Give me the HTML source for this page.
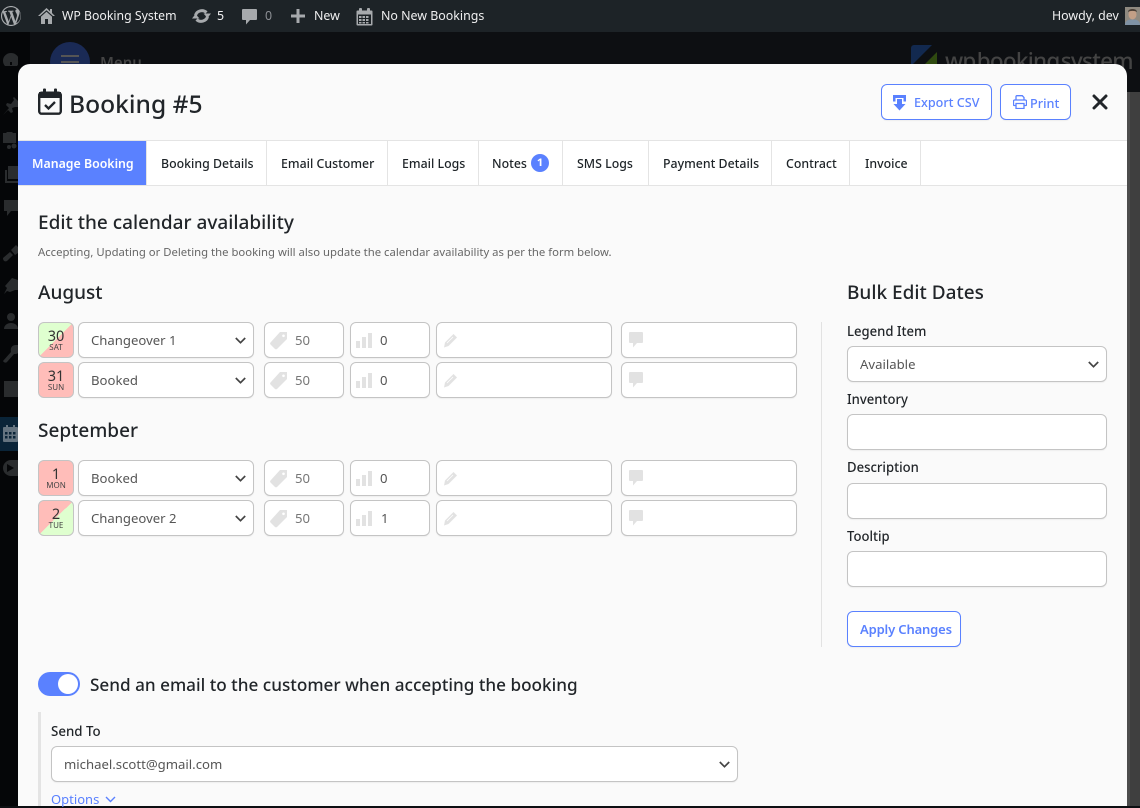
<!DOCTYPE html>
<html><head><meta charset="utf-8"><title>Booking #5</title>
<style>
*{box-sizing:border-box}
html,body{margin:0;padding:0;width:1140px;height:806px;overflow:hidden;background:#0d0f12;font-family:"Noto Sans","Noto Sans CJK SC","DejaVu Sans",sans-serif;color:#212529}
.a{position:absolute;white-space:nowrap}
svg{position:absolute;display:block}
.bar{color:#f0f0f1;font-size:12.4px;line-height:16px}
.box{position:absolute;height:36px;background:#fff;border:1px solid #c4c4c4;border-radius:6px;box-shadow:0 1px 1px rgba(0,0,0,.05)}
.t{font-size:12.35px;line-height:16px;color:#1d2327;top:156px;font-weight:500}
.tb{position:absolute;top:141px;width:1px;height:44px;background:#e4e4e4}
.v{font-size:13.15px;line-height:16px;color:#555}
.d{position:absolute;width:36px;height:36px;border:1px solid #c4c4c4;border-radius:6px;text-align:center;color:#333}
.d b{display:block;font-weight:400;font-size:14.500px;line-height:14px;margin-top:6px}
.d i{display:block;font-style:normal;font-size:8px;line-height:9px;color:#444}
.g{background:linear-gradient(to bottom right,#dfffcf 50%,#ffbdb9 50%)}
.r{background:#ffbdb9}
.y{background:linear-gradient(to bottom right,#ffbdb9 50%,#dfffcf 50%)}
.l{font-size:13.1px;line-height:16px;font-weight:500;color:#212529}
.h{font-size:19px;line-height:24px;font-weight:500;color:#212529}
</style></head><body>

<!-- backdrop -->
<div class="a" style="left:0;top:32px;width:30px;height:774px;background:#050608"></div>
<div class="a" style="left:0;top:417px;width:18px;height:34px;background:#0a2438"></div>
<div class="a" style="left:1127px;top:92px;width:13px;height:714px;background:#3f3f3f"></div>
<div class="a" style="left:1127px;top:92px;width:3px;height:714px;background:#4c4c4c"></div>
<div class="a" style="left:50px;top:42px;width:40px;height:40px;border-radius:50%;background:#1a2a55"></div>
<div class="a" style="left:61px;top:55px;width:18px;height:2px;background:#555;box-shadow:0 6px 0 #555"></div>
<div class="a" style="left:100px;top:52px;font-size:15px;line-height:22px;color:#444;font-weight:600">Menu</div>
<svg style="left:911px;top:45px" width="27" height="27" viewBox="0 0 27 27"><path d="M3 0h18L0 21V3a3 3 0 0 1 3-3z" fill="#12294f"/><path d="M26 7v17a3 3 0 0 1-3 3H6z" fill="#2f4a10"/></svg>
<div class="a" style="left:945px;top:46px;font-size:22.500px;line-height:30px;color:#444;font-weight:500;letter-spacing:-.75px;word-spacing:-4px">wp booking system</div>

<!-- sidebar icons -->
<svg style="left:0;top:0" width="18" height="806" viewBox="0 0 18 806" fill="#2a2c2e">
<path fill-rule="evenodd" d="M11 53a8 7.500 0 0 0-8 7.500c0 2.500.7 4 2 5.500h12c1.300-1.500 2-3 2-5.500A8 7.500 0 0 0 11 53zM10 62h2v3h-2z"/>
<path d="M3 115l6-7-3-3 1-2 4 1 3-4-1-2 1-1 4 4v6h-3l-3 1 1 4-2 1-3-3z"/>
<path d="M3 133h3l1-1h5l1 1h3v10H3z"/><circle cx="14" cy="146" r="2.500"/><circle cx="9" cy="147" r="2"/>
<path d="M8 166h10v13H8z"/><path d="M5 170h2v11h11v2H5z"/>
<path d="M4 200h14v11h-7l-4 5v-5H4z"/>
<path d="M3 258l7-6 3 3-6 6c-2 1-4 0-4-3zM11 250l5-5 2 2v6l-3 2z"/>
<path d="M4 294l3-6-2-2 7-8 6 2v10l-3 0-5 2-3-1z"/>
<circle cx="11" cy="317" r="4"/><path d="M4 329c0-8 14-8 14 0z"/>
<path d="M3 361l8-9c-1-4 1-7 5-7l2 0v8c-1 1-2 1-4 1l-7 8c-1 1-3 1-4-1z"/>
<path d="M4 381h14v16H4z"/>
<path d="M11 460a8 8 0 1 0 0 16h7v-16z"/>
</svg>
<svg style="left:3px;top:425px" width="15" height="18" viewBox="0 0 15 18"><rect y="2" width="15" height="15" rx="1" fill="#657480"/><rect x="3" width="2" height="4" fill="#657480"/><rect x="10" width="2" height="4" fill="#657480"/><path d="M2 7h2.500v2.500H2zM6 7h2.500v2.500H6zM10 7h2.500v2.500H10zM2 11h2.500v2.500H2zM6 11h2.500v2.500H6zM10 11h2.500v2.500H10z" fill="#0a2438"/></svg>
<svg style="left:6px;top:464px" width="12" height="8" viewBox="0 0 12 8"><path d="M1 0l7 4-7 4z" fill="#050608"/></svg>

<!-- admin bar -->
<div class="a" style="left:0;top:0;width:1140px;height:32px;background:#1d2327"></div>
<svg style="left:1px;top:6px" width="20" height="20" viewBox="0 0 20 20"><path fill-rule="evenodd" d="M20 10c0-5.510-4.490-10-10-10C4.480 0 0 4.490 0 10c0 5.520 4.480 10 10 10 5.510 0 10-4.480 10-10zM7.780 15.370L4.370 6.220c.55-.02 1.170-.08 1.170-.08.5-.06.44-1.130-.06-1.110 0 0-1.450.11-2.370.11-.18 0-.37 0-.58-.01C4.120 2.690 6.930 1.110 10 1.110c2.290 0 4.380.87 5.950 2.300-.04 0-.07-.01-.12-.01-.87 0-1.480.75-1.480 1.560 0 .73.42 1.340.87 2.070.34.59.73 1.340.73 2.430 0 .75-.29 1.620-.67 2.830l-.88 2.940-3.180-9.460c.53-.03 1-.08 1-.08.47-.06.42-1.130-.06-1.110 0 0-1.420.11-2.340.11-.87 0-2.320-.11-2.320-.11-.48-.02-.54 1.080-.06 1.110l.92.08 1.370 3.750-1.930 5.770zM1.110 10c0-1.290.28-2.510.77-3.620l4.240 11.620C3.160 16.560 1.110 13.520 1.110 10zm8.890 8.890c-.87 0-1.710-.13-2.510-.37l2.660-7.740 2.730 7.480c.02.04.04.08.06.12-.92.33-1.920.51-2.940.51zm5.200-1.550l2.710-7.840c.51-1.270.67-2.280.67-3.180 0-.33-.02-.63-.06-.92.7 1.280 1.100 2.740 1.100 4.600 0 3.270-1.780 6.130-4.420 7.340z" fill="#a7aaad"/></svg>
<svg style="left:38px;top:8px" width="17" height="16" viewBox="0 0 17 16" fill="#a7aaad"><path d="M8.500 0L0 8h2L8.500 2.200 15 8h2l-3-3V1h-2v2.200z"/><path d="M3 8.600L8.500 3.800 14 8.600V16h-4v-5H7v5H3z"/></svg>
<div class="a bar" style="left:62px;top:8px;font-size:12.27px">WP Booking System</div>
<svg style="left:192px;top:8px" width="19" height="16" viewBox="0 0 19 16"><path d="M3.500 7.500A6.500 6 0 0 1 14.500 4.500" fill="none" stroke="#a7aaad" stroke-width="3"/><path d="M11.500 5.500h7.500l-3.500 4.500z" fill="#a7aaad"/><path d="M15.500 8.500A6.500 6 0 0 1 4.500 11.500" fill="none" stroke="#a7aaad" stroke-width="3"/><path d="M0 10.500h7.500L3.500 6z" fill="#a7aaad"/></svg>
<div class="a bar" style="left:217px;top:8px">5</div>
<svg style="left:242px;top:9px" width="15" height="16" viewBox="0 0 15 16"><path d="M1 0h13a1 1 0 0 1 1 1v9a1 1 0 0 1-1 1H8l-4 4.500V11H1a1 1 0 0 1-1-1V1a1 1 0 0 1 1-1z" fill="#a7aaad"/></svg>
<div class="a bar" style="left:265px;top:8px;color:#8c8f94">0</div>
<svg style="left:291px;top:9px" width="14" height="14" viewBox="0 0 14 14"><path d="M5.500 0h3v5.500H14v3H8.500V14h-3V8.500H0v-3h5.500z" fill="#a7aaad"/></svg>
<div class="a bar" style="left:314px;top:8px">New</div>
<svg style="left:356px;top:8px" width="17" height="18" viewBox="0 0 17 18"><rect x="0.500" y="2.500" width="16" height="15" rx="1" fill="#a7aaad"/><rect x="3" y="0" width="3" height="5" rx="1" fill="#a7aaad"/><rect x="11" y="0" width="3" height="5" rx="1" fill="#a7aaad"/><path d="M2 6.500h13v9.500H2z" fill="#1d2327"/><path d="M3 8h2.500v2H3zM6.500 8h2.500v2H6.500zM10 8h2.500v2H10zM3 11h2.500v2H3zM6.500 11h2.500v2H6.500zM10 11h2.500v2H10zM3 14h2.500v1.500H3zM6.500 14h2.500v1.500H6.500zM10 14h2.500v1.500H10z" fill="#a7aaad"/></svg>
<div class="a bar" style="left:381px;top:8px">No New Bookings</div>
<div class="a bar" style="left:1052px;top:8px">Howdy, dev</div>
<svg style="left:1125px;top:7px" width="15" height="18" viewBox="0 0 15 18"><rect width="15" height="18" fill="#8f8a80"/><ellipse cx="7.500" cy="7.500" rx="4" ry="5" fill="#c29f86"/><path d="M3 5c0-4 9-4 9 0-2-1.500-7-1.500-9 0z" fill="#4a3f35"/><path d="M0 18c0-5 4-5.500 7.500-5.500S15 13 15 18z" fill="#7f92a5"/></svg>

<!-- modal -->
<div class="a" style="left:18px;top:64px;width:1109px;height:742px;background:#fafafa;border-radius:12px 12px 0 0;overflow:hidden"></div>

<svg style="left:38px;top:88px" width="24" height="27" viewBox="0 0 24 27"><rect x="1.200" y="4.700" width="21.600" height="21" rx="2.500" fill="none" stroke="#212529" stroke-width="2.400"/><rect x="1" y="4" width="22" height="6" fill="#212529"/><rect x="5" y="0.500" width="3" height="6" rx="1" fill="#212529"/><rect x="16" y="0.500" width="3" height="6" rx="1" fill="#212529"/><path d="M7 17l3.500 3.500L17 14" fill="none" stroke="#212529" stroke-width="2.300"/></svg>
<div class="a" style="left:69px;top:88px;font-size:24.600px;line-height:34px;font-weight:500;color:#212529">Booking #5</div>

<div class="box" style="left:881px;top:84px;width:111px;height:36px;border-color:#5a81ff"></div>
<svg style="left:893px;top:95px" width="14" height="16" viewBox="0 0 14 16"><path d="M0 0h13v6.500h-2.500V3h-8v3.500H0z" fill="#5a81ff"/><path d="M4 4h5v5h3.500L6.500 15.500 .5 9H4z" fill="#5a81ff"/></svg>
<div class="a" style="left:914px;top:94px;font-size:12.600px;line-height:18px;font-weight:500;color:#5a81ff">Export CSV</div>
<div class="box" style="left:1000px;top:84px;width:71px;height:36px;border-color:#5a81ff"></div>
<svg style="left:1013px;top:95px" width="14" height="14" viewBox="0 0 14 14"><path d="M3 5V1.500A.8.800 0 0 1 3.800.7h5.500L11 2.500V5M3 10.500H1.200a.7.700 0 0 1-.7-.7V6.200A1.200 1.200 0 0 1 1.700 5h10.600a1.200 1.200 0 0 1 1.200 1.200v3.600a.7.700 0 0 1-.7.700H11M3 8.500h8v5H3z" fill="none" stroke="#5a81ff" stroke-width="1.300"/></svg>
<div class="a" style="left:1030px;top:94px;font-size:12.700px;line-height:18px;font-weight:500;color:#5a81ff">Print</div>
<svg style="left:1092px;top:94px" width="16" height="16" viewBox="0 0 16 16"><path d="M2 2l12 12M14 2L2 14" stroke="#212529" stroke-width="3" stroke-linecap="round"/></svg>

<!-- tabs -->
<div class="a" style="left:18px;top:140px;width:1109px;height:46px;background:#fff;border-top:1px solid #e4e4e4;border-bottom:1px solid #e4e4e4"></div>
<div class="a" style="left:18px;top:141px;width:128px;height:44px;background:#5a81ff"></div>
<div class="tb" style="left:146px"></div><div class="tb" style="left:266px"></div><div class="tb" style="left:387px"></div><div class="tb" style="left:478px"></div><div class="tb" style="left:562px"></div><div class="tb" style="left:648px"></div><div class="tb" style="left:771px"></div><div class="tb" style="left:849px"></div><div class="tb" style="left:920px"></div>
<div class="a t" style="left:32px;color:#fff;font-weight:600">Manage Booking</div>
<div class="a t" style="left:161px">Booking Details</div>
<div class="a t" style="left:281px">Email Customer</div>
<div class="a t" style="left:402px">Email Logs</div>
<div class="a t" style="left:492px">Notes</div>
<div class="a" style="left:531px;top:154px;width:18px;height:18px;border-radius:50%;background:#5a81ff;color:#fff;font-size:11px;line-height:18px;text-align:center;font-weight:700">1</div>
<div class="a t" style="left:577px">SMS Logs</div>
<div class="a t" style="left:663px">Payment Details</div>
<div class="a t" style="left:786px">Contract</div>
<div class="a t" style="left:865px">Invoice</div>

<div class="a" style="left:38px;top:210px;font-size:19px;line-height:24px;font-weight:500">Edit the calendar availability</div>
<div class="a" style="left:38px;top:245px;font-size:11.320px;line-height:16px;color:#666">Accepting, Updating or Deleting the booking will also update the calendar availability as per the form below.</div>
<div class="a h" style="left:38px;top:280px">August</div>
<div class="a h" style="left:38px;top:418px">September</div>
<div class="a h" style="left:847px;top:280px">Bulk Edit Dates</div>

<!-- row 1 -->
<div class="d g" style="left:38px;top:322px"><b>30</b><i>SAT</i></div>
<div class="box" style="left:78px;top:322px;width:176px"></div><div class="a v" style="left:91px;top:332px">Changeover 1</div>
<svg style="left:235px;top:337px" width="11" height="8" viewBox="0 0 11 8"><path d="M.8 1l4.700 4.700L10.200 1" fill="none" stroke="#444" stroke-width="1.700"/></svg>
<div class="box" style="left:264px;top:322px;width:80px"></div><svg style="left:270px;top:332px" width="18" height="18" viewBox="0 0 18 18"><path d="M10 0h7v7L7 17q-1 .8-2 0L.5 12.500q-.8-1 0-2z" fill="#e2e2e2"/><circle cx="13.500" cy="3.800" r="1.300" fill="#fff"/></svg><div class="a v" style="left:295px;top:332px;color:#777">50</div>
<div class="box" style="left:350px;top:322px;width:80px"></div><svg style="left:356px;top:332px" width="17" height="17" viewBox="0 0 17 17"><path d="M0 9h4v7H0zM6 5h4v11H6zM12 1h4v15h-4z" fill="#e2e2e2"/></svg><div class="a v" style="left:380px;top:332px">0</div>
<div class="box" style="left:436px;top:322px;width:176px"></div><svg style="left:443px;top:333px" width="15" height="15" viewBox="0 0 15 15"><path d="M10.500 1l3.500 3.500-8.500 8.500L1 14.500 2 9.500z" fill="#e2e2e2"/><path d="M4 10l6-6" stroke="#fff" stroke-width=".7"/></svg>
<div class="box" style="left:621px;top:322px;width:176px"></div><svg style="left:629px;top:332px" width="14" height="16" viewBox="0 0 14 16"><path d="M1 0h12a1 1 0 0 1 1 1v9a1 1 0 0 1-1 1H8l-4 4.500V11H1a1 1 0 0 1-1-1V1a1 1 0 0 1 1-1z" fill="#e2e2e2"/></svg>

<!-- row 2 -->
<div class="d r" style="left:38px;top:362px"><b>31</b><i>SUN</i></div>
<div class="box" style="left:78px;top:362px;width:176px"></div><div class="a v" style="left:91px;top:372px">Booked</div>
<svg style="left:235px;top:377px" width="11" height="8" viewBox="0 0 11 8"><path d="M.8 1l4.700 4.700L10.200 1" fill="none" stroke="#444" stroke-width="1.700"/></svg>
<div class="box" style="left:264px;top:362px;width:80px"></div><svg style="left:270px;top:372px" width="18" height="18" viewBox="0 0 18 18"><path d="M10 0h7v7L7 17q-1 .8-2 0L.5 12.500q-.8-1 0-2z" fill="#e2e2e2"/><circle cx="13.500" cy="3.800" r="1.300" fill="#fff"/></svg><div class="a v" style="left:295px;top:372px;color:#777">50</div>
<div class="box" style="left:350px;top:362px;width:80px"></div><svg style="left:356px;top:372px" width="17" height="17" viewBox="0 0 17 17"><path d="M0 9h4v7H0zM6 5h4v11H6zM12 1h4v15h-4z" fill="#e2e2e2"/></svg><div class="a v" style="left:380px;top:372px">0</div>
<div class="box" style="left:436px;top:362px;width:176px"></div><svg style="left:443px;top:373px" width="15" height="15" viewBox="0 0 15 15"><path d="M10.500 1l3.500 3.500-8.500 8.500L1 14.500 2 9.500z" fill="#e2e2e2"/><path d="M4 10l6-6" stroke="#fff" stroke-width=".7"/></svg>
<div class="box" style="left:621px;top:362px;width:176px"></div><svg style="left:629px;top:372px" width="14" height="16" viewBox="0 0 14 16"><path d="M1 0h12a1 1 0 0 1 1 1v9a1 1 0 0 1-1 1H8l-4 4.500V11H1a1 1 0 0 1-1-1V1a1 1 0 0 1 1-1z" fill="#e2e2e2"/></svg>

<!-- row 3 -->
<div class="d r" style="left:38px;top:460px"><b>1</b><i>MON</i></div>
<div class="box" style="left:78px;top:460px;width:176px"></div><div class="a v" style="left:91px;top:470px">Booked</div>
<svg style="left:235px;top:475px" width="11" height="8" viewBox="0 0 11 8"><path d="M.8 1l4.700 4.700L10.200 1" fill="none" stroke="#444" stroke-width="1.700"/></svg>
<div class="box" style="left:264px;top:460px;width:80px"></div><svg style="left:270px;top:470px" width="18" height="18" viewBox="0 0 18 18"><path d="M10 0h7v7L7 17q-1 .8-2 0L.5 12.500q-.8-1 0-2z" fill="#e2e2e2"/><circle cx="13.500" cy="3.800" r="1.300" fill="#fff"/></svg><div class="a v" style="left:295px;top:470px;color:#777">50</div>
<div class="box" style="left:350px;top:460px;width:80px"></div><svg style="left:356px;top:470px" width="17" height="17" viewBox="0 0 17 17"><path d="M0 9h4v7H0zM6 5h4v11H6zM12 1h4v15h-4z" fill="#e2e2e2"/></svg><div class="a v" style="left:380px;top:470px">0</div>
<div class="box" style="left:436px;top:460px;width:176px"></div><svg style="left:443px;top:471px" width="15" height="15" viewBox="0 0 15 15"><path d="M10.500 1l3.500 3.500-8.500 8.500L1 14.500 2 9.500z" fill="#e2e2e2"/><path d="M4 10l6-6" stroke="#fff" stroke-width=".7"/></svg>
<div class="box" style="left:621px;top:460px;width:176px"></div><svg style="left:629px;top:470px" width="14" height="16" viewBox="0 0 14 16"><path d="M1 0h12a1 1 0 0 1 1 1v9a1 1 0 0 1-1 1H8l-4 4.500V11H1a1 1 0 0 1-1-1V1a1 1 0 0 1 1-1z" fill="#e2e2e2"/></svg>

<!-- row 4 -->
<div class="d y" style="left:38px;top:500px"><b>2</b><i>TUE</i></div>
<div class="box" style="left:78px;top:500px;width:176px"></div><div class="a v" style="left:91px;top:510px">Changeover 2</div>
<svg style="left:235px;top:515px" width="11" height="8" viewBox="0 0 11 8"><path d="M.8 1l4.700 4.700L10.200 1" fill="none" stroke="#444" stroke-width="1.700"/></svg>
<div class="box" style="left:264px;top:500px;width:80px"></div><svg style="left:270px;top:510px" width="18" height="18" viewBox="0 0 18 18"><path d="M10 0h7v7L7 17q-1 .8-2 0L.5 12.500q-.8-1 0-2z" fill="#e2e2e2"/><circle cx="13.500" cy="3.800" r="1.300" fill="#fff"/></svg><div class="a v" style="left:295px;top:510px;color:#777">50</div>
<div class="box" style="left:350px;top:500px;width:80px"></div><svg style="left:356px;top:510px" width="17" height="17" viewBox="0 0 17 17"><path d="M0 9h4v7H0zM6 5h4v11H6zM12 1h4v15h-4z" fill="#e2e2e2"/></svg><div class="a v" style="left:381px;top:510px">1</div>
<div class="box" style="left:436px;top:500px;width:176px"></div><svg style="left:443px;top:511px" width="15" height="15" viewBox="0 0 15 15"><path d="M10.500 1l3.500 3.500-8.500 8.500L1 14.500 2 9.500z" fill="#e2e2e2"/><path d="M4 10l6-6" stroke="#fff" stroke-width=".7"/></svg>
<div class="box" style="left:621px;top:500px;width:176px"></div><svg style="left:629px;top:510px" width="14" height="16" viewBox="0 0 14 16"><path d="M1 0h12a1 1 0 0 1 1 1v9a1 1 0 0 1-1 1H8l-4 4.500V11H1a1 1 0 0 1-1-1V1a1 1 0 0 1 1-1z" fill="#e2e2e2"/></svg>

<!-- bulk -->
<div class="a" style="left:821px;top:322px;width:1px;height:325px;background:#e2e2e2"></div>
<div class="a l" style="left:847px;top:323px">Legend Item</div>
<div class="box" style="left:847px;top:346px;width:260px"></div><div class="a v" style="left:860px;top:356px">Available</div>
<svg style="left:1088px;top:361px" width="11" height="8" viewBox="0 0 11 8"><path d="M.8 1l4.700 4.700L10.200 1" fill="none" stroke="#444" stroke-width="1.700"/></svg>
<div class="a l" style="left:847px;top:391px">Inventory</div>
<div class="box" style="left:847px;top:414px;width:260px"></div>
<div class="a l" style="left:847px;top:459px">Description</div>
<div class="box" style="left:847px;top:483px;width:260px"></div>
<div class="a l" style="left:847px;top:528px">Tooltip</div>
<div class="box" style="left:847px;top:551px;width:260px"></div>
<div class="box" style="left:847px;top:611px;width:114px;border-color:#5a81ff"></div>
<div class="a" style="left:860px;top:621px;font-size:13px;line-height:16px;font-weight:600;letter-spacing:-.15px;color:#5a81ff">Apply Changes</div>

<!-- email -->
<div class="a" style="left:38px;top:672px;width:42px;height:24px;border-radius:12px;background:#5a81ff"></div>
<div class="a" style="left:58px;top:674px;width:20px;height:20px;border-radius:50%;background:#fff"></div>
<div class="a" style="left:90px;top:674px;font-size:17.150px;line-height:24px;font-weight:500;color:#212529">Send an email to the customer when accepting the booking</div>
<div class="a" style="left:38px;top:712px;width:3px;height:94px;background:#e4e4e4"></div>
<div class="a l" style="left:51px;top:723px;font-size:13.300px">Send To</div>
<div class="box" style="left:51px;top:746px;width:687px"></div><div class="a v" style="left:64px;top:756px">michael.scott@gmail.com</div>
<svg style="left:719px;top:761px" width="11" height="8" viewBox="0 0 11 8"><path d="M.8 1l4.700 4.700L10.200 1" fill="none" stroke="#444" stroke-width="1.700"/></svg>
<div class="a" style="left:51px;top:791px;font-size:13px;line-height:16px;color:#5a81ff">Options</div>
<svg style="left:105px;top:796px" width="11" height="7" viewBox="0 0 11 7"><path d="M1 1l4.500 4.500L10 1" fill="none" stroke="#5a81ff" stroke-width="1.400"/></svg>
</body></html>
